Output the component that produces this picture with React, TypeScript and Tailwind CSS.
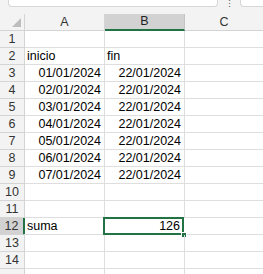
import React from 'react';

const ROWS: { a: string; b: string; aRight?: boolean; bRight?: boolean }[] = [
  { a: '', b: '' },
  { a: 'inicio', b: 'fin' },
  { a: '01/01/2024', b: '22/01/2024', aRight: true, bRight: true },
  { a: '02/01/2024', b: '22/01/2024', aRight: true, bRight: true },
  { a: '03/01/2024', b: '22/01/2024', aRight: true, bRight: true },
  { a: '04/01/2024', b: '22/01/2024', aRight: true, bRight: true },
  { a: '05/01/2024', b: '22/01/2024', aRight: true, bRight: true },
  { a: '06/01/2024', b: '22/01/2024', aRight: true, bRight: true },
  { a: '07/01/2024', b: '22/01/2024', aRight: true, bRight: true },
  { a: '', b: '' },
  { a: '', b: '' },
  { a: 'suma', b: '126', bRight: true },
  { a: '', b: '' },
  { a: '', b: '' },
];

const font = { fontFamily: '"Liberation Sans", Arial, sans-serif' };

export default function App() {
  return (
    <div className="w-[263px] h-[274px] overflow-hidden bg-white text-[12.5px] leading-none text-black" style={font}>
      {/* formula bar strip */}
      <div className="h-[14px] bg-[#f3f3f3] flex items-start">
        <div className="ml-[8px] w-[210px] h-[7px] bg-white border border-t-0 border-[#d6d6d6] rounded-b-[4px]" />
        <div className="w-[22px] h-[10px] flex justify-center items-start text-[#555] text-[9px] leading-[8px]">⋮</div>
        <div className="flex-1 h-[7px] bg-white border border-t-0 border-r-0 border-[#d6d6d6] rounded-bl-[4px]" />
      </div>

      {/* column headers */}
      <div className="flex h-[17px] bg-[#f3f3f3] text-[#333]">
        <div className="w-[25px] shrink-0 border-r border-b border-[#d4d4d4] flex items-end justify-end pr-[3px] pb-[3px]">
          <div className="w-0 h-0 border-l-[9px] border-l-transparent border-b-[9px] border-b-[#bdbdbd]" />
        </div>
        <div className="w-[80px] shrink-0 border-r border-b border-[#d4d4d4] flex items-center justify-center">A</div>
        <div className="w-[80px] shrink-0 bg-[#d2d2d2] border-r border-[#c4c4c4] border-b-2 border-b-[#217346] flex items-center justify-center text-[#222]">B</div>
        <div className="flex-1 border-b border-[#d4d4d4] flex items-center justify-center">C</div>
      </div>

      {ROWS.map((r, i) => {
        const n = i + 1;
        const sel = n === 12;
        return (
          <div key={n} className="flex h-[17px]">
            <div
              className={`w-[25px] shrink-0 border-b border-[#d4d4d4] flex items-center justify-center text-[#333] ${
                sel ? 'bg-[#d2d2d2] border-r-2 border-r-[#217346]' : 'bg-[#f3f3f3] border-r border-r-[#d4d4d4]'
              }`}
            >
              {n}
            </div>
            <div
              className={`w-[80px] shrink-0 border-r border-b border-[#dedede] flex items-center whitespace-nowrap ${
                r.aRight ? 'justify-end pr-[3px]' : 'justify-start pl-[2px]'
              } ${sel ? '-ml-px pl-[3px]' : ''}`}
            >
              {r.a}
            </div>
            <div className="relative w-[80px] shrink-0 border-r border-b border-[#dedede] flex items-center justify-end pr-[3px] whitespace-nowrap">
              {r.bRight ? r.b : <span className="mr-auto pl-[2px]">{r.b}</span>}
              {sel && (
                <>
                  <div className="absolute -left-px -top-px w-[81px] h-[18px] border-2 border-[#217346]" />
                  <div className="absolute -right-[4px] -bottom-[4px] w-[6px] h-[6px] bg-[#217346] border border-white" />
                </>
              )}
            </div>
            <div className="flex-1 border-b border-[#dedede]" />
          </div>
        );
      })}

      {/* partly visible next row */}
      <div className="flex h-[17px]">
        <div className="w-[25px] shrink-0 bg-[#f3f3f3] border-r border-[#d4d4d4]" />
        <div className="w-[80px] shrink-0 border-r border-[#dedede]" />
        <div className="w-[80px] shrink-0 border-r border-[#dedede]" />
        <div className="flex-1" />
      </div>
    </div>
  );
}
